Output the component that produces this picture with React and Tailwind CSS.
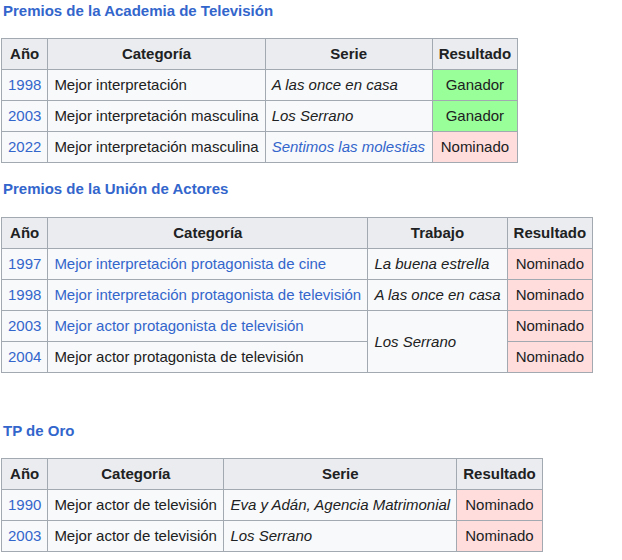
import React from "react";

const font = { fontFamily: '"Liberation Sans", Arial, sans-serif' };

function Result({ value }) {
  const bg = value === "Ganador" ? "bg-[#99ff99]" : "bg-[#ffdddd]";
  return (
    <td className={`border border-[#a2a9b1] px-[6px] py-[4px] text-center ${bg}`}>
      {value}
    </td>
  );
}

function Cell({ children, link, italic, rowSpan }) {
  return (
    <td
      rowSpan={rowSpan}
      className={`border border-[#a2a9b1] px-[6px] py-[4px] whitespace-nowrap ${
        link ? "text-[#3366cc]" : ""
      } ${italic ? "italic" : ""}`}
    >
      {children}
    </td>
  );
}

function Head({ children }) {
  return (
    <th className="border border-[#a2a9b1] bg-[#eaecf0] px-[6px] py-[4px] font-bold text-center whitespace-nowrap">
      {children}
    </th>
  );
}

function AwardTable({ widths, third, rows }) {
  return (
    <table className="border-collapse table-fixed bg-[#f8f9fa] text-[15px] leading-[22px] text-[#202122]">
      <colgroup>
        {widths.map((w, i) => (
          <col key={i} style={{ width: w }} />
        ))}
      </colgroup>
      <thead>
        <tr>
          <Head>Año</Head>
          <Head>Categoría</Head>
          <Head>{third}</Head>
          <Head>Resultado</Head>
        </tr>
      </thead>
      <tbody>
        {rows.map((r, i) => (
          <tr key={i}>
            <Cell link>{r.year}</Cell>
            <Cell link={r.catLink}>{r.cat}</Cell>
            {r.work !== undefined && (
              <Cell italic link={r.workLink} rowSpan={r.span}>
                {r.work}
              </Cell>
            )}
            <Result value={r.result} />
          </tr>
        ))}
      </tbody>
    </table>
  );
}

function Title({ children, className }) {
  return (
    <div className={`text-[15px] leading-[22px] font-bold text-[#3366cc] pl-[2px] ${className}`}>
      {children}
    </div>
  );
}

export default function App() {
  return (
    <div className="bg-white min-h-[560px] w-[622px] pl-[1px]" style={font}>
      <Title>Premios de la Academia de Televisión</Title>
      <div className="mt-[16px]">
        <AwardTable
          widths={[46, 216, 167, 83]}
          third="Serie"
          rows={[
            { year: "1998", cat: "Mejor interpretación", work: "A las once en casa", result: "Ganador" },
            { year: "2003", cat: "Mejor interpretación masculina", work: "Los Serrano", result: "Ganador" },
            { year: "2022", cat: "Mejor interpretación masculina", work: "Sentimos las molestias", workLink: true, result: "Nominado" },
          ]}
        />
      </div>

      <Title className="mt-[15px]">Premios de la Unión de Actores</Title>
      <div className="mt-[17px]">
        <AwardTable
          widths={[46, 320, 138, 85]}
          third="Trabajo"
          rows={[
            { year: "1997", cat: "Mejor interpretación protagonista de cine", catLink: true, work: "La buena estrella", result: "Nominado" },
            { year: "1998", cat: "Mejor interpretación protagonista de televisión", catLink: true, work: "A las once en casa", result: "Nominado" },
            { year: "2003", cat: "Mejor actor protagonista de televisión", catLink: true, work: "Los Serrano", span: 2, result: "Nominado" },
            { year: "2004", cat: "Mejor actor protagonista de televisión", result: "Nominado" },
          ]}
        />
      </div>

      <Title className="mt-[47px]">TP de Oro</Title>
      <div className="mt-[16px]">
        <AwardTable
          widths={[46, 176, 232, 84]}
          third="Serie"
          rows={[
            { year: "1990", cat: "Mejor actor de televisión", work: "Eva y Adán, Agencia Matrimonial", result: "Nominado" },
            { year: "2003", cat: "Mejor actor de televisión", work: "Los Serrano", result: "Nominado" },
          ]}
        />
      </div>
    </div>
  );
}
